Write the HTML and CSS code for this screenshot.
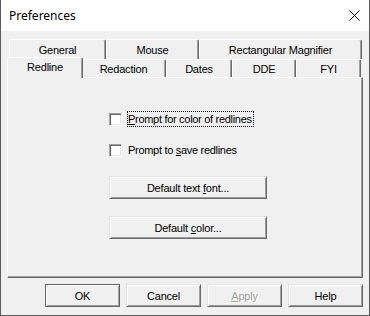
FILE: index.html
```html
<!DOCTYPE html>
<html lang="en">
<head>
  <meta charset="UTF-8">
  <title>Preferences</title>
  <link rel="stylesheet" href="styles.css">
</head>
<body>
  <div class="window">
    <div class="titlebar">
      <span class="title">Preferences</span>
      <svg class="close" width="11" height="11" viewBox="0 0 11 11">
        <path d="M0.5 0.5 L10.5 10.5 M10.5 0.5 L0.5 10.5" stroke="#000" stroke-width="1" fill="none"/>
      </svg>
    </div>

    <div class="content">
      <div class="tabs">
        <div class="tab-row back">
          <div class="tab t-general">General</div>
          <div class="tab t-mouse">Mouse</div>
          <div class="tab t-rect">Rectangular Magnifier</div>
        </div>
        <div class="tab-row front">
          <div class="tab t-redline active">Redline</div>
          <div class="tab t-redaction">Redaction</div>
          <div class="tab t-dates">Dates</div>
          <div class="tab t-dde">DDE</div>
          <div class="tab t-fyi">FYI</div>
        </div>
      </div>

      <div class="panel">
        <div class="check first">
          <span class="box"></span>
          <span class="label focus"><u>P</u>rompt for color of redlines</span>
        </div>
        <div class="check">
          <span class="box"></span>
          <span class="label">Prompt to <u>s</u>ave redlines</span>
        </div>
        <button class="btn wide first-btn">Default text <u>f</u>ont...</button>
        <button class="btn wide">Default <u>c</u>olor...</button>
      </div>

      <div class="buttons">
        <button class="btn default">OK</button>
        <button class="btn">Cancel</button>
        <button class="btn disabled"><u>A</u>pply</button>
        <button class="btn">Help</button>
      </div>
    </div>
  </div>
</body>
</html>
```

FILE: styles.css
```css
body {
  margin: 0;
  padding: 0;
  background: #f0f0f0;
  font-family: 'Liberation Sans', Arial, sans-serif;
  font-size: 11px;
  color: #000;
}
.window {
  width: 370px;
  height: 316px;
  box-sizing: border-box;
  border: 1px solid #5a5a5a;
  border-top: none;
  background: #f0f0f0;
}
.titlebar {
  height: 31px;
  background: #fff;
  display: flex;
  align-items: center;
  justify-content: space-between;
  padding: 0 9px 0 8px;
}
.title {
  font-family: 'Noto Sans', sans-serif;
  font-size: 12px;
  color: #000;
}
.content {
  padding: 0 6px;
}
.tabs {
  margin-top: 8px;
  height: 38px;
}
.tab-row {
  display: flex;
}
.tab-row.back {
  height: 20px;
  padding-left: 2px;
}
.tab-row.front {
  height: 18px;
  padding-left: 2px;
}
.tab {
  box-sizing: border-box;
  height: 100%;
  background: #f0f0f0;
  border-top: 1px solid #fff;
  border-left: 1px solid #fff;
  border-right: 1px solid #696969;
  border-radius: 2px 2px 0 0;
  box-shadow: inset -1px 0 #a0a0a0;
  text-align: center;
  line-height: 16px;
  letter-spacing: -0.2px;
  white-space: nowrap;
}
.back .tab {
  padding-top: 2px;
}
.front .tab {
  padding-top: 1px;
}
.t-general { width: 97px; }
.t-mouse { width: 93px; }
.t-rect { width: 163px; }
.t-redline { width: 72px; }
.t-redaction { width: 85px; }
.t-dates { width: 66px; }
.t-dde { width: 64px; }
.t-fyi { width: 65px; }
.tab.active {
  position: relative;
  z-index: 1;
  width: 76px;
  height: 21px;
  margin: -2px -2px 0 -2px;
  padding-top: 1px;
}
.panel {
  box-sizing: border-box;
  height: 201px;
  border: 1px solid;
  border-color: #fff #696969 #696969 #fff;
  box-shadow: inset -1px -1px #a0a0a0;
  padding: 33px 0 0 101px;
}
.check {
  display: flex;
  align-items: center;
  height: 16px;
  margin-bottom: 15px;
}
.box {
  box-sizing: border-box;
  width: 13px;
  height: 13px;
  background: #fff;
  border: 1px solid;
  border-color: #a0a0a0 #fff #fff #a0a0a0;
  box-shadow: inset 1px 1px #696969, inset -1px -1px #e3e3e3;
}
.label {
  margin-left: 5px;
  padding: 0 1px 0 0;
  border: 1px dotted transparent;
  line-height: 14px;
  letter-spacing: -0.3px;
}
.label.focus {
  border-color: #000;
}
.btn {
  box-sizing: border-box;
  display: block;
  width: 75px;
  height: 23px;
  padding: 0;
  background: #f0f0f0;
  border: 1px solid;
  border-color: #e3e3e3 #696969 #696969 #e3e3e3;
  box-shadow: inset 1px 1px #fff, inset -1px -1px #a0a0a0;
  font-family: 'Liberation Sans', Arial, sans-serif;
  font-size: 11px;
  letter-spacing: -0.2px;
  color: #000;
}
.btn.wide {
  width: 158px;
}
.btn.first-btn {
  margin-top: 18px;
  margin-bottom: 17px;
}
.btn.default {
  border-color: #646464;
}
.btn.disabled {
  color: #a0a0a0;
  text-shadow: 1px 1px #fff;
}
.buttons {
  display: flex;
  gap: 6px;
  margin-top: 6px;
  padding-left: 38px;
}
```
